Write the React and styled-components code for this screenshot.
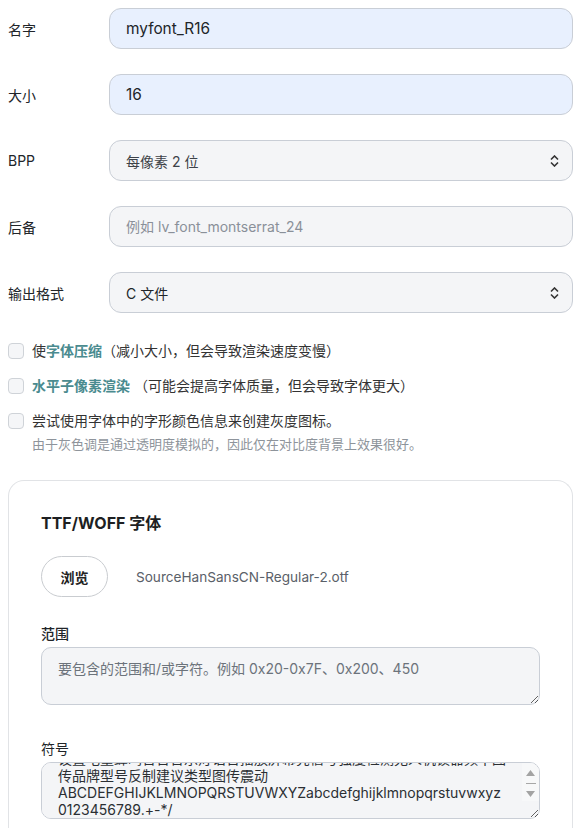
import { useEffect, useRef } from "react";
import styled, { createGlobalStyle } from "styled-components";

const GlobalStyle = createGlobalStyle`
  html, body {
    margin: 0;
    padding: 0;
    background: #fff;
  }
  body {
    font-family: Inter, "Noto Sans CJK SC", sans-serif;
    color: #212529;
    font-size: 14px;
  }
  * { box-sizing: border-box; }
`;

const Page = styled.div`
  padding: 8px 6px 0 8px;
`;

const FieldRow = styled.div`
  display: grid;
  grid-template-columns: 101px 1fr;
  align-items: center;
  margin-bottom: ${(p) => (p.$last ? 0 : 25)}px;
`;

const Label = styled.label`
  font-size: 14px;
  color: #212529;
`;

const TextInput = styled.input`
  height: 41px;
  width: 100%;
  padding: 0 16px;
  font-family: Inter, "Noto Sans CJK SC", sans-serif;
  font-size: 15.4px;
  color: #212529;
  background: ${(p) => (p.$filled ? "#e8f0fe" : "#f4f5f7")};
  border: 1px solid #c9ced6;
  border-radius: 12px;
  outline: none;
  &::placeholder {
    font-size: 14px;
    color: #8a9099;
  }
`;

const SelectBox = styled.div`
  position: relative;
  height: 41px;
  display: flex;
  align-items: center;
  padding: 0 16px;
  font-size: 14px;
  background: #f4f5f7;
  border: 1px solid #c9ced6;
  border-radius: 12px;
  color: ${(p) => (p.$muted ? "#3d4248" : "#212529")};
`;

const Arrows = styled.svg`
  position: absolute;
  right: 13px;
  top: 50%;
  margin-top: -6px;
`;

const Checks = styled.div`
  display: flex;
  flex-direction: column;
  gap: 17px;
  margin-top: 29px;
`;

const CheckRow = styled.label`
  display: flex;
  align-items: flex-start;
  gap: 8px;
  font-size: 14px;
  line-height: 18px;
  color: #333;
`;

const Box = styled.span`
  flex: none;
  width: 16px;
  height: 16px;
  margin-top: 1px;
  border: 1px solid #cfd3d8;
  border-radius: 4px;
  background: #f5f6f8;
`;

const Link = styled.span`
  color: #4a8b8f;
  font-weight: 600;
`;

const Hint = styled.div`
  font-size: 13px;
  color: #8e949b;
  margin-top: 5px;
`;

const Card = styled.section`
  margin-top: 27px;
  border: 1px solid #e1e3e6;
  border-bottom: none;
  border-radius: 16px 16px 0 0;
  padding: 29px 32px 40px 32px;
`;

const CardTitle = styled.h3`
  margin: 0;
  font-size: 16px;
  font-weight: 700;
  color: #1d1f22;
`;

const FileRow = styled.div`
  display: flex;
  align-items: center;
  gap: 28px;
  margin-top: 22px;
`;

const BrowseButton = styled.button`
  height: 41px;
  width: 67px;
  border: 1px solid #c9ccd0;
  border-radius: 21px;
  background: #fff;
  font-family: Inter, "Noto Sans CJK SC", sans-serif;
  font-size: 14px;
  font-weight: 700;
  color: #222;
`;

const FileName = styled.span`
  font-size: 13.6px;
  color: #5a6068;
`;

const Field = styled.div`
  margin-top: ${(p) => p.$top}px;
  display: flex;
  flex-direction: column;
  gap: 4px;
`;

const SmallLabel = styled.label`
  font-size: 14px;
  color: #212529;
  font-weight: ${(p) => (p.$bold ? 500 : 400)};
`;

const AreaWrap = styled.div`
  position: relative;
`;

const Area = styled.textarea`
  display: block;
  width: 100%;
  height: ${(p) => p.$h}px;
  padding: ${(p) => p.$pad};
  font-family: Inter, "Noto Sans CJK SC", sans-serif;
  font-size: 14px;
  line-height: 17px;
  color: #2b2f33;
  background: #f4f5f7;
  border: 1px solid #c9ced6;
  border-radius: 10px;
  outline: none;
  white-space: pre-wrap;
  &::placeholder {
    color: #6c737b;
  }
`;

const ScrollButtons = styled.div`
  position: absolute;
  top: 1px;
  right: 1px;
  width: 17px;
  height: 38px;
  background: #f7f8f9;
  border-top-right-radius: 9px;
  display: flex;
  flex-direction: column;
  align-items: center;
  padding-top: 7px;
  gap: 7px;
`;

const ThumbLine = styled.span`
  width: 10px;
  height: 1px;
  background: #a7a7a7;
`;

const symbols =
  "连接断开打开关闭开始停止暂停继续确定取消返回设置菜单主页搜索添加删除编\n" +
  "设置电量蜂鸣音音音乐灯语音播放屏幕亮信号强度检测无人机锁器频率图\n" +
  "传品牌型号反制建议类型图传震动\nABCDEFGHIJKLMNOPQRSTUVWXYZabcdefghijklmnopqrstuvwxyz\n0123456789.+-*/";

function SelectArrows() {
  return (
    <Arrows width="9" height="12" viewBox="0 0 9 12">
      <path d="M1 4.5 L4.5 1 L8 4.5" fill="none" stroke="#333" strokeWidth="1.6" />
      <path d="M1 7.5 L4.5 11 L8 7.5" fill="none" stroke="#333" strokeWidth="1.6" />
    </Arrows>
  );
}

function Triangle({ down }) {
  return (
    <svg width="9" height="6" viewBox="0 0 9 6">
      <path d={down ? "M0 0 H9 L4.5 6 Z" : "M0 6 H9 L4.5 0 Z"} fill="#a3a3a3" />
    </svg>
  );
}

export default function App() {
  const symRef = useRef(null);

  useEffect(() => {
    if (symRef.current) symRef.current.scrollTop = symRef.current.scrollHeight;
  }, []);

  return (
    <Page>
      <GlobalStyle />
      <FieldRow>
        <Label>名字</Label>
        <TextInput $filled defaultValue="myfont_R16" />
      </FieldRow>
      <FieldRow>
        <Label>大小</Label>
        <TextInput $filled defaultValue="16" />
      </FieldRow>
      <FieldRow>
        <Label>BPP</Label>
        <SelectBox $muted>
          每像素 2 位
          <SelectArrows />
        </SelectBox>
      </FieldRow>
      <FieldRow>
        <Label>后备</Label>
        <TextInput placeholder="例如 lv_font_montserrat_24" />
      </FieldRow>
      <FieldRow $last>
        <Label>输出格式</Label>
        <SelectBox>
          C 文件
          <SelectArrows />
        </SelectBox>
      </FieldRow>

      <Checks>
        <CheckRow>
          <Box />
          <span>
            使<Link>字体压缩</Link>（减小大小，但会导致渲染速度变慢）
          </span>
        </CheckRow>
        <CheckRow>
          <Box />
          <span>
            <Link>水平子像素渲染</Link> （可能会提高字体质量，但会导致字体更大）
          </span>
        </CheckRow>
        <CheckRow>
          <Box />
          <div>
            尝试使用字体中的字形颜色信息来创建灰度图标。
            <Hint>由于灰色调是通过透明度模拟的，因此仅在对比度背景上效果很好。</Hint>
          </div>
        </CheckRow>
      </Checks>

      <Card>
        <CardTitle>TTF/WOFF 字体</CardTitle>
        <FileRow>
          <BrowseButton>浏览</BrowseButton>
          <FileName>SourceHanSansCN-Regular-2.otf</FileName>
        </FileRow>
        <Field $top={26}>
          <SmallLabel $bold>范围</SmallLabel>
          <Area $h={58} $pad="12px 16px" placeholder="要包含的范围和/或字符。例如 0x20-0x7F、0x200、450" />
        </Field>
        <Field $top={33}>
          <SmallLabel>符号</SmallLabel>
          <AreaWrap>
            <Area ref={symRef} $h={57} $pad="4px 20px 0 16px" defaultValue={symbols} />
            <ScrollButtons>
              <Triangle />
              <ThumbLine />
              <Triangle down />
            </ScrollButtons>
          </AreaWrap>
        </Field>
      </Card>
    </Page>
  );
}
